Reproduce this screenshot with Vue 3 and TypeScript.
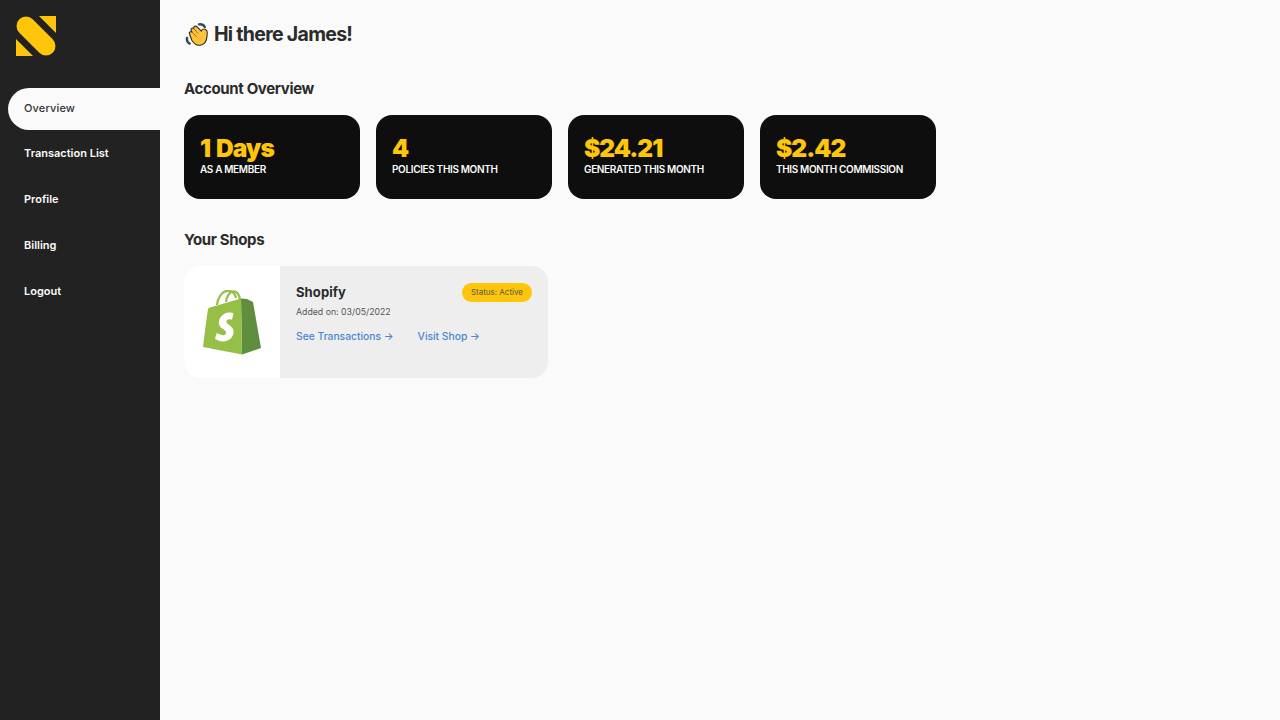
<script setup lang="ts">
const nav: string[] = ['Overview', 'Transaction List', 'Profile', 'Billing', 'Logout']
const stats: { value: string; label: string }[] = [
  { value: '1 Days', label: 'AS A MEMBER' },
  { value: '4', label: 'POLICIES THIS MONTH' },
  { value: '$24.21', label: 'GENERATED THIS MONTH' },
  { value: '$2.42', label: 'THIS MONTH COMMISSION' },
]
</script>

<template>
  <div class="layout">
    <aside class="sidebar">
      <svg class="logo" width="40" height="40" viewBox="0 0 40 40">
        <path d="M23 0H40V17Z" fill="#fdc60a" />
        <path d="M0 23L17 40H0Z" fill="#fdc60a" />
        <path d="M10 10L30 30" fill="none" stroke="#fdc60a" stroke-width="19" stroke-linecap="round" />
      </svg>
      <nav class="nav">
        <a v-for="(item, i) in nav" :key="item" class="nav-item" :class="{ active: i === 0 }">{{ item }}</a>
      </nav>
    </aside>
    <main class="main">
      <h1 class="greeting">
        <svg class="wave" width="24" height="24" viewBox="0 0 24 24">
          <path d="M2 15C1.6 17.2 2.6 19.4 4.6 20.6M14 1.4C16.4 1 18.6 2 19.8 4" fill="none" stroke="#33495a" stroke-width="2.4" stroke-linecap="round" />
          <path d="M4.6 11.2C3.4 9.6 5.4 7.8 7 9L6.2 7.6C5.2 5.8 7.4 4.2 8.8 5.6L8.8 5.2C8.4 3.4 10.6 2.4 12 3.8L16.4 8.2C16.8 6.6 18.2 5.6 20 6.2C22 6.8 22.4 8.6 22.2 10.6C21.8 13.6 22.2 16 20.4 19C18.4 22.2 14.4 23.2 11 21.4C9 20.4 7.8 18.6 6.8 17.2Z" fill="#fdc33a" stroke="#2e2a1e" stroke-width="1.1" stroke-linejoin="round" />
          <path d="M7 9L11.2 13.4M8.8 5.6L13 10.4" fill="none" stroke="#8a6a14" stroke-width="0.9" stroke-linecap="round" />
        </svg>
        <span>Hi there James!</span>
      </h1>
      <h2 class="section-title overview-title">Account Overview</h2>
      <section class="stats">
        <div v-for="stat in stats" :key="stat.label" class="stat">
          <div class="stat-value">{{ stat.value }}</div>
          <div class="stat-label">{{ stat.label }}</div>
        </div>
      </section>
      <h2 class="section-title shops-title">Your Shops</h2>
      <section class="shop">
        <div class="shop-logo">
          <svg width="58" height="65" viewBox="0 0 58 65">
            <path d="M14 15C14.5 8 19 0.8 25 0.8C29 0.8 32 3.5 33 8" fill="none" stroke="#95bf47" stroke-width="2.2" />
            <path d="M23 12C23.5 7 26.5 1.6 30 1.4C34 1.2 36.4 5 37 10" fill="none" stroke="#95bf47" stroke-width="2.2" />
            <path d="M38 8.5L44 9L50 12L58 58L39 64.5Z" fill="#5e8e3e" />
            <path d="M39 64.5L0 57C1.4 46 3.8 26 5 19.5C5.2 18.4 5.6 18 7 17.6L38 8.5Z" fill="#95bf47" />
            <path d="M30.5 23.5C30 23.2 28 22.4 26 22.6C20 23 15.8 28 15.8 32.8C15.8 38.5 22.6 39 23 42.2C23.2 44 22 45.2 20.4 45.2C18 45.2 13.8 43 13.8 43L12 48.5C12 48.5 15.2 51.5 20 51.5C26 51.5 30.6 47 30.6 42C30.6 35.6 23.4 34.6 23.4 31.8C23.4 30.6 24.4 29.2 26.4 29.2C28 29.2 29 29.8 29 29.8Z" fill="#fff" />
          </svg>
        </div>
        <div class="shop-body">
          <div class="shop-head">
            <span class="shop-name">Shopify</span>
            <span class="badge">Status: Active</span>
          </div>
          <div class="shop-date">Added on: 03/05/2022</div>
          <div class="shop-links">
            <a class="link">See Transactions →</a>
            <a class="link">Visit Shop →</a>
          </div>
        </div>
      </section>
    </main>
  </div>
</template>

<style>
html, body { margin: 0; background: #fafafa; }
</style>

<style scoped>
.layout {
  display: flex;
  height: 720px;
  font-family: Inter, "Liberation Sans", sans-serif;
  background: #fafafa;
  color: #2b2b2b;
}
.sidebar {
  width: 160px;
  flex-shrink: 0;
  background: #222222;
  padding: 16px 0 0 8px;
  box-sizing: border-box;
}
.logo { display: block; margin-left: 8px; }
.nav { display: flex; flex-direction: column; margin-top: 32px; gap: 4px; }
.nav-item {
  height: 42px;
  display: flex;
  align-items: center;
  padding-left: 16px;
  font-size: 11px;
  font-weight: 600;
  color: #fafafa;
  border-radius: 21px 0 0 21px;
}
.nav-item.active {
  box-sizing: border-box;
  padding-bottom: 2px;
  margin-bottom: -2px;
  background: #fafafa;
  color: #333;
  font-weight: 500;
  letter-spacing: 0.15px;
}
.main { flex: 1; padding: 0 0 0 24px; }
.greeting {
  display: flex;
  align-items: center;
  gap: 5px;
  margin: 22px 0 0;
  height: 24px;
  font-size: 19.5px;
  font-weight: 700;
  letter-spacing: -0.7px;
  line-height: 24px;
}
.wave { margin-left: 1px; margin-top: 1px; }
.section-title { margin: 0; font-size: 15px; font-weight: 700; letter-spacing: -0.35px; line-height: 20px; }
.overview-title { margin-top: 33px; }
.stats { display: flex; gap: 16px; margin-top: 16px; }
.stat {
  width: 176px;
  height: 84px;
  box-sizing: border-box;
  padding: 19px 16px 0;
  border-radius: 16px;
  background: #0e0e0e;
}
.stat-value { font-size: 24.5px; font-weight: 900; line-height: 28px; letter-spacing: -1px; word-spacing: 2px; color: #fdc60a; }
.stat-label { font-size: 10px; font-weight: 600; line-height: 14px; color: #fafafa; letter-spacing: -0.35px; }
.shops-title { margin-top: 31px; }
.shop {
  display: flex;
  width: 364px;
  height: 112px;
  margin-top: 16px;
  border-radius: 16px;
  overflow: hidden;
  background: #eeeeee;
}
.shop-logo { width: 96px; background: #fff; display: flex; align-items: center; justify-content: center; }
.shop-body { flex: 1; padding: 16px; }
.shop-head { display: flex; justify-content: space-between; align-items: center; height: 20px; }
.shop-name { font-size: 13px; font-weight: 700; letter-spacing: 0.1px; }
.badge {
  background: #fdc60a;
  border-radius: 10px;
  height: 19px;
  line-height: 19px;
  padding: 0 9px;
  font-size: 8px;
  color: #555;
}
.shop-date { margin-top: 3px; font-size: 8.75px; line-height: 14px; color: #555; }
.shop-links { display: flex; gap: 24px; margin-top: 10px; }
.link { font-size: 10.3px; font-weight: 500; line-height: 14px; color: #4a86d0; }
</style>
